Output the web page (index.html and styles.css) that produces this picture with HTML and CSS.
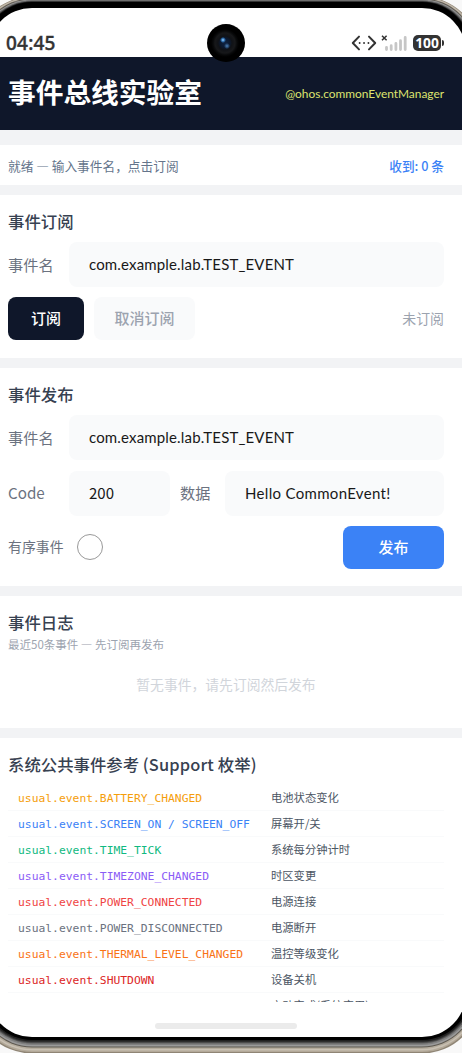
FILE: index.html
```html
<!DOCTYPE html>
<html lang="zh-CN">
<head>
  <meta charset="UTF-8">
  <meta name="viewport" content="width=device-width, initial-scale=1.0">
  <title>事件总线实验室</title>
  <link rel="stylesheet" href="styles.css">
</head>
<body>
  <div class="phone">
    <div class="statusbar">
      <span class="clock">04:45</span>
      <div class="status-icons">
        <svg width="26" height="16" viewBox="0 0 26 16" fill="none" stroke="#333" stroke-width="2" stroke-linecap="round" stroke-linejoin="round">
          <path d="M8 1.6L1.8 8L8 14.4M18 1.6L24.2 8L18 14.4"/>
          <path d="M8.6 8h.1M13 8h.1M17.4 8h.1" stroke-width="1.8"/>
        </svg>
        <svg class="signal" width="27" height="18" viewBox="0 0 27 18" fill="none" stroke-linecap="round">
          <path d="M1 1.7l4.6 4.6M5.6 1.7l-4.6 4.6" stroke="#333" stroke-width="1.5" stroke-linecap="butt"/>
          <path d="M5.5 13.3v2.3M10.2 11.7v3.9M14.9 9.5v6.1M19.5 6.7v8.9M24.2 3.4v12.2" stroke="#c6c6c6" stroke-width="2.8"/>
        </svg>
        <div class="battery">100</div>
      </div>
      <div class="camera"></div>
    </div>

    <div class="content">
      <div class="header">
        <h1>事件总线实验室</h1>
        <span class="module">@ohos.commonEventManager</span>
      </div>

      <div class="status">
        <span>就绪 — 输入事件名，点击订阅</span>
        <span class="count">收到: 0 条</span>
      </div>

      <div class="card subscribe">
        <h2>事件订阅</h2>
        <div class="row">
          <span class="label">事件名</span>
          <div class="input"><span class="event-name">com.example.lab.TEST_EVENT</span></div>
        </div>
        <div class="row buttons">
          <button class="btn dark">订阅</button>
          <button class="btn light">取消订阅</button>
          <span class="state">未订阅</span>
        </div>
      </div>

      <div class="card publish">
        <h2>事件发布</h2>
        <div class="row">
          <span class="label">事件名</span>
          <div class="input"><span class="event-name">com.example.lab.TEST_EVENT</span></div>
        </div>
        <div class="row">
          <span class="label code">Code</span>
          <div class="input small">200</div>
          <span class="label data">数据</span>
          <div class="input"><span class="message">Hello CommonEvent!</span></div>
        </div>
        <div class="row buttons">
          <span class="ordered">有序事件</span>
          <span class="radio"></span>
          <button class="btn blue">发布</button>
        </div>
      </div>

      <div class="card log">
        <h2>事件日志</h2>
        <p class="hint">最近50条事件 — 先订阅再发布</p>
        <p class="empty">暂无事件，请先订阅然后发布</p>
      </div>

      <div class="card reference">
        <h2>系统公共事件参考 <span class="support">(Support 枚举)</span></h2>
        <div class="event"><code class="amber">usual.event.BATTERY_CHANGED</code><span>电池状态变化</span></div>
        <div class="event"><code class="azure">usual.event.SCREEN_ON / SCREEN_OFF</code><span>屏幕开/关</span></div>
        <div class="event"><code class="green">usual.event.TIME_TICK</code><span>系统每分钟计时</span></div>
        <div class="event"><code class="purple">usual.event.TIMEZONE_CHANGED</code><span>时区变更</span></div>
        <div class="event"><code class="red">usual.event.POWER_CONNECTED</code><span>电源连接</span></div>
        <div class="event"><code class="gray">usual.event.POWER_DISCONNECTED</code><span>电源断开</span></div>
        <div class="event"><code class="orange">usual.event.THERMAL_LEVEL_CHANGED</code><span>温控等级变化</span></div>
        <div class="event"><code class="crimson">usual.event.SHUTDOWN</code><span>设备关机</span></div>
        <div class="event"><code class="gray">usual.event.BOOT_COMPLETED</code><span>启动完成(系统应用)</span></div>
      </div>
    </div>

    <div class="navbar"><div class="home"></div></div>
  </div>
</body>
</html>
```
FILE: styles.css
```css
* {
  box-sizing: border-box;
}

body {
  margin: 0;
  height: 1053px;
  overflow: hidden;
  background: #f8f8f8;
  font-family: "Noto Sans CJK SC", sans-serif;
}

h1, h2, p {
  margin: 0;
}

.phone {
  width: 478px;
  height: 1029px;
  margin: 8px 0 0 -12px;
  border-radius: 44px;
  background: #fff;
  display: flex;
  flex-direction: column;
  box-shadow:
    0 -1.5px 0 4.5px #000,
    0 -1px 0 5.5px #202020,
    0 -0.5px 0 6px #3c3c3c,
    0 -0.5px 0 7px #5c5c5c,
    0 0 0 8px #808080,
    0 0.5px 0 9px #9a9a9a,
    0 0.5px 0 10px #5f5a52,
    0 1px 0 11px #b5ac9d,
    0 1.5px 0 12px #c9c1b4,
    0 2px 0 13px #b3a999,
    0 2.5px 0 14px #8f8575;
}

.statusbar {
  position: relative;
  height: 49px;
  flex: none;
  padding: 0 20px 0 18px;
  display: flex;
  justify-content: space-between;
  align-items: center;
}

.clock {
  padding-top: 20px;
  font-family: "Noto Sans", sans-serif;
  font-size: 19px;
  font-weight: 500;
  letter-spacing: 0.2px;
  line-height: 28px;
  color: #333;
  -webkit-text-stroke: 0.4px #333;
}

.status-icons {
  padding-top: 21px;
  display: flex;
  align-items: center;
}

.signal {
  margin: 0 5px 0 4px;
}

.battery {
  position: relative;
  width: 28px;
  height: 16px;
  margin-right: 5px;
  border-radius: 5px;
  background: #333;
  color: #fff;
  font: bold 13.8px/16px "Noto Sans", sans-serif;
  text-align: center;
}

.battery::after {
  content: "";
  position: absolute;
  left: 29px;
  top: 5px;
  width: 2px;
  height: 6px;
  border-radius: 0 2px 2px 0;
  background: #333;
}

.camera {
  position: absolute;
  left: 219px;
  top: 16px;
  width: 38px;
  height: 38px;
  border-radius: 50%;
  background:
    radial-gradient(circle at 16px 16px, #a8d8ff 0, #3477b8 1.5px, transparent 3px),
    radial-gradient(circle at 20px 22px, #4c83bd 0, transparent 3px),
    radial-gradient(circle at 18px 19px, #0e2344 0, #0b182d 5px, #101216 7px, #17181a 10px, #08090a 12px, #000 14px);
}

.content {
  height: 945px;
  flex: none;
  overflow: hidden;
  background: #f2f3f5;
}

.header {
  height: 73px;
  padding: 0 22px 0 20px;
  display: flex;
  justify-content: space-between;
  align-items: center;
  background: #0f172a;
}

h1 {
  padding-bottom: 5px;
  font-size: 27.7px;
  line-height: 40px;
  font-weight: 700;
  color: #fff;
}

.module {
  padding-bottom: 1px;
  font-family: Lato, sans-serif;
  font-size: 11.9px;
  color: #dde36f;
}

.status {
  height: 40px;
  margin: 15px 0 10px;
  padding: 1px 22px 0 20px;
  display: flex;
  justify-content: space-between;
  align-items: center;
  background: #fff;
  font-size: 12.7px;
  color: #64748b;
}

.count {
  font-weight: 500;
}

.status .count {
  color: #3b82f6;
}

.card {
  padding: 14px 22px 0 20px;
  margin-bottom: 10px;
  background: #fff;
}

.subscribe {
  height: 163px;
}

.publish {
  height: 218px;
}

.log {
  height: 132px;
}

.reference {
  height: 300px;
}

h2 {
  font-size: 16.4px;
  line-height: 24px;
  font-weight: 500;
  color: #374151;
}

.row {
  display: flex;
  align-items: center;
  margin-top: 10.5px;
}

.row.buttons {
  margin-top: 10px;
}

h2 + .row {
  margin-top: 9px;
}

.label {
  width: 61px;
  flex: none;
  padding-bottom: 2px;
  font-size: 15.2px;
  color: #6b7280;
}

.label.data {
  width: 45px;
  margin-left: 10px;
}

.input {
  flex: 1;
  height: 45px;
  padding-left: 20px;
  border-radius: 8px;
  background: #f9fafb;
  font-size: 15px;
  line-height: 43px;
  color: #181818;
}

.input.small {
  flex: none;
  width: 101px;
}

.event-name, .message {
  font-family: Lato, "Noto Sans CJK SC", sans-serif;
  letter-spacing: 0.16px;
}

.message {
  letter-spacing: 0.32px;
}

.btn {
  height: 43px;
  padding: 0 0 2px;
  border: none;
  border-radius: 8px;
  font-family: inherit;
  font-size: 15px;
  font-weight: 500;
}

.dark {
  width: 76px;
  background: #0f172a;
  color: #fff;
}

.light {
  width: 101px;
  margin-left: 10px;
  background: #f9fafb;
  color: #9ca3af;
}

.blue {
  width: 101px;
  margin-left: auto;
  background: #3b82f6;
  color: #fff;
}

.state {
  margin-left: auto;
  padding-bottom: 2px;
  font-size: 13.9px;
  color: #9ca3af;
}

.ordered {
  padding-bottom: 2px;
  font-size: 13.9px;
  color: #6b7280;
}

.radio {
  width: 26px;
  height: 26px;
  margin-left: 13px;
  border: 1.5px solid #999;
  border-radius: 50%;
}

.hint {
  padding-top: 1px;
  font-size: 11.5px;
  line-height: 18px;
  color: #9ca3af;
}

.empty {
  margin-top: 21px;
  font-size: 13.8px;
  line-height: 20px;
  text-align: center;
  color: #d1d5db;
}

.event {
  height: 26px;
  padding-left: 10px;
  display: flex;
  align-items: center;
  border-bottom: 1px solid #f9fafb;
  font-size: 11.3px;
  color: #4b5563;
}

.event span {
  padding-bottom: 2px;
}

.reference h2 {
  margin-bottom: 9px;
}

.support {
  letter-spacing: 0.15px;
}

.event code {
  width: 253px;
  flex: none;
  font-family: "DejaVu Sans Mono", monospace;
  font-size: 11.33px;
  white-space: pre;
}

.amber { color: #f59e0b; }
.azure { color: #3b82f6; }
.green { color: #10b981; }
.purple { color: #8b5cf6; }
.red { color: #ef4444; }
.gray { color: #6b7280; }
.orange { color: #f97316; }
.crimson { color: #dc2626; }

.navbar {
  flex: 1;
  display: flex;
  justify-content: center;
  align-items: flex-end;
  padding: 0 0 8px;
}

.home {
  width: 142px;
  height: 6px;
  margin-right: 2px;
  border-radius: 3px;
  background: #ebebeb;
}
```
